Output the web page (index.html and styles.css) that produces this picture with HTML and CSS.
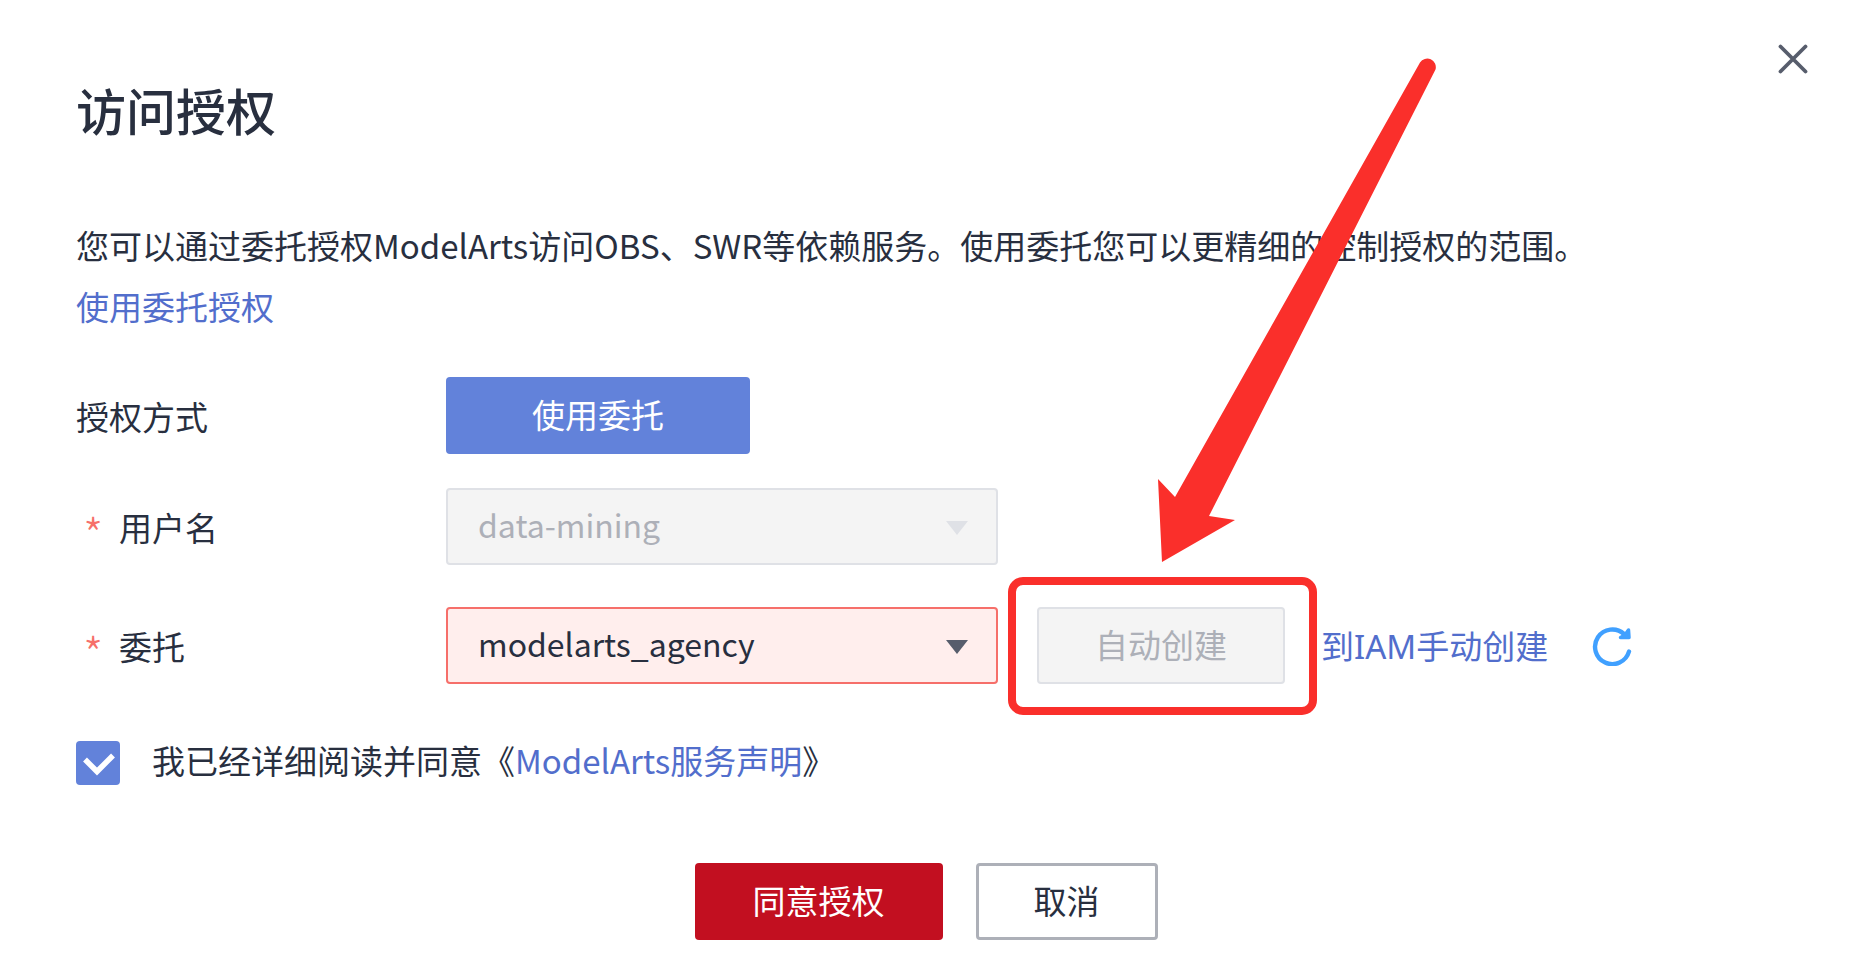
FILE: index.html
```html
<!DOCTYPE html>
<html lang="zh-CN">
  <head>
    <meta charset="UTF-8" />
    <meta name="viewport" content="width=device-width, initial-scale=1.0" />
    <title>访问授权</title>
    <link rel="stylesheet" href="styles.css">
  </head>
  <body>
    <main class="dialog">
      <button class="close" type="button" aria-label="关闭">
        <svg width="30" height="30" viewBox="0 0 30 30">
          <path d="M2.5 2.5L27.5 27.5M27.5 2.5L2.5 27.5" fill="none" stroke="#575d6c" stroke-width="3.8" stroke-linecap="round" />
        </svg>
      </button>

      <h1>访问授权</h1>
      <p class="intro">
        您可以通过委托授权ModelArts访问OBS、SWR等依赖服务。使用委托您可以更精细的控制授权的范围。<br />
        <a href="#">使用委托授权</a>
      </p>

      <form>
        <div class="row">
          <span class="label">授权方式</span>
          <button class="btn mode" type="button">使用委托</button>
        </div>
        <div class="row">
          <label class="label required" for="username">用户名</label>
          <div class="select">
            <select id="username" disabled>
              <option>data-mining</option>
            </select>
          </div>
        </div>
        <div class="row agency-row">
          <label class="label required" for="agency">委托</label>
          <div class="select error">
            <select id="agency">
              <option>modelarts_agency</option>
            </select>
          </div>
          <div class="auto-create">
            <button class="btn" type="button" disabled>自动创建</button>
            <span class="highlight"></span>
            <svg class="arrow" width="282" height="508" viewBox="0 0 282 508">
              <path d="M262 5.5A8.6 8.6 0 0 1 277.5 12.5L51 459L77 463L4 505L0 422L17 440Z" fill="#fa2f2b" />
            </svg>
          </div>
          <a class="manual" href="#">到IAM手动创建</a>
          <button class="refresh" type="button" aria-label="刷新">
            <svg width="40" height="40" viewBox="0 0 40 40">
              <path d="M37 25.5A17.3 17.3 0 1 1 32 8" fill="none" stroke="#40a0ff" stroke-width="4.4" stroke-linecap="round" />
              <path d="M36.5 4L37 11.5L28.5 11.5L33 9Z" fill="#40a0ff" stroke="#40a0ff" stroke-width="3.5" stroke-linejoin="round" />
            </svg>
          </button>
        </div>

        <div class="agree">
          <span class="checkbox">
            <input type="checkbox" id="agree" checked />
            <svg width="44" height="44" viewBox="0 0 44 44">
              <path d="M9 18.5L21 30.5L37 14.5" fill="none" stroke="#fff" stroke-width="5.5" />
            </svg>
          </span>
          <label for="agree">我已经详细阅读并同意《<a href="#">ModelArts服务声明</a>》</label>
        </div>

        <div class="footer">
          <button class="btn primary" type="submit">同意授权</button>
          <button class="btn cancel" type="button">取消</button>
        </div>
      </form>
    </main>
  </body>
</html>
```
FILE: styles.css
```css
* {
  margin: 0;
  padding: 0;
  box-sizing: border-box;
}
body {
  background: #fff;
  color: #282f3f;
  font-family: "Noto Sans CJK SC", sans-serif;
  font-size: 33px;
  line-height: 61px;
}
button,
select {
  font: inherit;
}
button {
  cursor: pointer;
}
a {
  color: #526ecc;
  text-decoration: none;
}
.dialog {
  position: relative;
  padding: 73px 76px 24px;
}
.close {
  position: absolute;
  top: 44px;
  right: 44px;
  border: none;
  background: none;
}
.close svg,
.refresh svg {
  display: block;
}
h1 {
  font-size: 50px;
  font-weight: 500;
  line-height: 72px;
}
.intro {
  margin-top: 70px;
  margin-bottom: 40px;
}
.row {
  display: flex;
  align-items: center;
  margin-bottom: 34px;
}
.agency-row {
  margin-top: 42px;
  margin-bottom: 57px;
}
.label {
  width: 370px;
  padding-top: 2px;
}
.required::before {
  content: "*";
  display: inline-block;
  width: 36px;
  padding-left: 7px;
  color: #f66f6a;
  font-size: 46px;
  font-weight: 300;
  line-height: 0;
  vertical-align: -12px;
}
.btn {
  width: 248px;
  height: 77px;
  padding-bottom: 2px;
  border: 3px solid transparent;
  border-radius: 4px;
}
.mode {
  width: 304px;
  background: #6282da;
  color: #fff;
}
.select {
  position: relative;
  width: 552px;
}
.select select {
  display: block;
  appearance: none;
  width: 100%;
  height: 77px;
  padding: 0 72px 4px 30px;
  border: 2px solid #dfe1e6;
  border-radius: 4px;
  background: #f4f4f4;
  color: #282f3f;
  font-size: 32px;
}
.select select:disabled {
  color: #adb0b8;
  opacity: 1;
}
.select::after {
  content: "";
  position: absolute;
  top: 33px;
  right: 30px;
  border: 11px solid transparent;
  border-top: 14px solid #dfe1e6;
  border-bottom: none;
  pointer-events: none;
}
.select.error select {
  border-color: #f66f6a;
  background: #ffeeed;
}
.select.error::after {
  border-top-color: #575d6c;
}
.auto-create {
  position: relative;
  margin-left: 39px;
}
.auto-create .btn {
  display: block;
  border: 2px solid #dfe1e6;
  background: #f4f4f4;
  color: #adb0b8;
}
.highlight {
  position: absolute;
  inset: -30px -32px -31px -29px;
  border: 8px solid #fa2f2b;
  border-radius: 15px;
  pointer-events: none;
}
.arrow {
  position: absolute;
  left: 121px;
  bottom: 119px;
  pointer-events: none;
}
.manual {
  margin-left: 36px;
  padding-top: 2px;
  font-family: "Noto Sans", "Noto Sans CJK SC", sans-serif;
}
.refresh {
  margin-left: 44px;
  border: none;
  background: none;
}
.agree {
  display: flex;
  align-items: center;
  gap: 32px;
  height: 44px;
}
.agree label {
  padding-bottom: 6px;
}
.checkbox {
  position: relative;
  width: 44px;
  height: 44px;
}
.checkbox input {
  display: block;
  appearance: none;
  width: 44px;
  height: 44px;
  border-radius: 4px;
  background: #6282da;
}
.checkbox svg {
  position: absolute;
  inset: 0;
  pointer-events: none;
}
.footer {
  display: flex;
  justify-content: center;
  gap: 33px;
  margin-top: 78px;
}
.primary {
  background: #c20f20;
  color: #fff;
}
.cancel {
  width: 182px;
  border-color: #adb0b8;
  background: #fff;
  color: #282f3f;
}
```
